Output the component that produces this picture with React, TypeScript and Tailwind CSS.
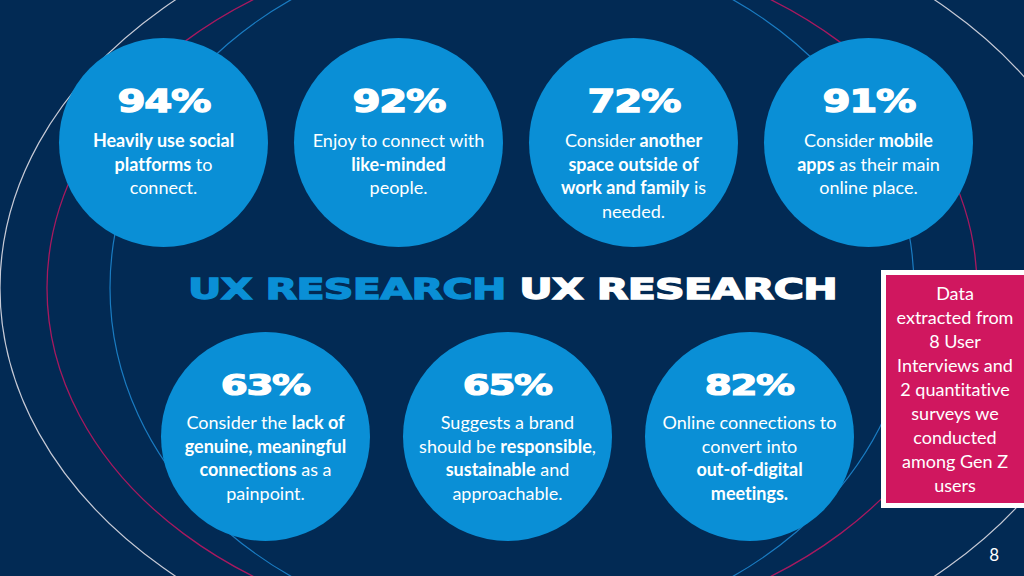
import React from "react";

type Part = { t: string; b?: boolean };
type Stat = { pct: string; lines: Part[][] };

const top: Stat[] = [
  {
    pct: "94%",
    lines: [
      [{ t: "Heavily use social", b: true }],
      [{ t: "platforms", b: true }, { t: " to" }],
      [{ t: "connect." }],
    ],
  },
  {
    pct: "92%",
    lines: [
      [{ t: "Enjoy to connect with" }],
      [{ t: "like-minded", b: true }],
      [{ t: "people." }],
    ],
  },
  {
    pct: "72%",
    lines: [
      [{ t: "Consider " }, { t: "another", b: true }],
      [{ t: "space outside of", b: true }],
      [{ t: "work and family", b: true }, { t: " is" }],
      [{ t: "needed." }],
    ],
  },
  {
    pct: "91%",
    lines: [
      [{ t: "Consider " }, { t: "mobile", b: true }],
      [{ t: "apps", b: true }, { t: " as their main" }],
      [{ t: "online place." }],
    ],
  },
];

const bottom: Stat[] = [
  {
    pct: "63%",
    lines: [
      [{ t: "Consider the " }, { t: "lack of", b: true }],
      [{ t: "genuine, meaningful", b: true }],
      [{ t: "connections", b: true }, { t: " as a" }],
      [{ t: "painpoint." }],
    ],
  },
  {
    pct: "65%",
    lines: [
      [{ t: "Suggests a brand" }],
      [{ t: "should be " }, { t: "responsible", b: true }, { t: "," }],
      [{ t: "sustainable", b: true }, { t: " and" }],
      [{ t: "approachable." }],
    ],
  },
  {
    pct: "82%",
    lines: [
      [{ t: "Online connections to" }],
      [{ t: "convert into" }],
      [{ t: "out-of-digital", b: true }],
      [{ t: "meetings.", b: true }],
    ],
  },
];

const wide = { fontFamily: '"DejaVu Sans", sans-serif' };
const body = { fontFamily: 'Lato, "Noto Sans", sans-serif' };

function Lines({ lines }: { lines: Part[][] }) {
  return (
    <div
      className="flex flex-col items-center text-white text-[18px] leading-[23.5px] [font-variant-ligatures:none]"
      style={body}
    >
      {lines.map((l, i) => (
        <div key={i} className="whitespace-nowrap">
          {l.map((p, j) => (
            <span key={j} className={p.b ? "font-bold" : "font-normal"}>
              {p.t}
            </span>
          ))}
        </div>
      ))}
    </div>
  );
}

function TopCircle({ s }: { s: Stat }) {
  return (
    <div className="w-[209px] h-[209px] shrink-0 rounded-full bg-[#0a8fd6] flex flex-col items-center pt-[47px]">
      <div
        className="text-white font-bold text-[32px] leading-[32px] scale-x-[1.26] tracking-[-1px] whitespace-nowrap [-webkit-text-stroke:1.3px_white]"
        style={wide}
      >
        {s.pct}
      </div>
      <div className="mt-[12px]">
        <Lines lines={s.lines} />
      </div>
    </div>
  );
}

function BottomCircle({ s }: { s: Stat }) {
  return (
    <div className="w-[209px] h-[209px] shrink-0 rounded-full bg-[#0a8fd6] flex flex-col items-center pt-[38px]">
      <div
        className="text-white font-bold text-[29px] leading-[30px] scale-x-[1.34] tracking-[-1px] whitespace-nowrap [-webkit-text-stroke:1.2px_white]"
        style={wide}
      >
        {s.pct}
      </div>
      <div className="mt-[11px]">
        <Lines lines={s.lines} />
      </div>
    </div>
  );
}

export default function App() {
  return (
    <div className="relative w-[1024px] h-[576px] overflow-hidden bg-[#022a54]">
      <svg
        className="absolute inset-0 pointer-events-none"
        width="1024"
        height="576"
        viewBox="0 0 1024 576"
      >
        <ellipse cx="555" cy="288" rx="555" ry="395" fill="none" stroke="#c7cad6" strokeWidth="1.2" />
        <ellipse cx="512" cy="288" rx="465" ry="347" fill="none" stroke="#a8195f" strokeWidth="1.3" />
        <ellipse cx="512" cy="288" rx="402" ry="345" fill="none" stroke="#1a7cc2" strokeWidth="1.2" />
      </svg>

      <div className="relative flex flex-col">
        <div className="flex gap-[26px] pl-[59px] pt-[38px]">
          {top.map((s) => (
            <TopCircle key={s.pct} s={s} />
          ))}
        </div>

        <div className="grid grid-cols-[881px_143px] mt-[23px]">
          <div className="col-start-1 col-span-2 row-start-1 flex justify-center pt-[1px]">
            <div
              className="font-bold text-[29px] leading-[36px] whitespace-nowrap scale-x-[1.42] tracking-[-0.5px]"
              style={wide}
            >
              <span className="text-[#0a8fd6] [-webkit-text-stroke:1.3px_#0a8fd6]">UX RESEARCH</span>
              <span className="text-white [-webkit-text-stroke:1.3px_white]"> UX RESEARCH</span>
            </div>
          </div>

          <div className="col-start-2 row-start-1 row-span-2 self-start h-[238px] border-[5px] border-r-0 border-white bg-[#d0175f] pt-[6px]">
            <div
              className="flex flex-col items-center text-white text-[18px] leading-[24px] [font-variant-ligatures:none]"
              style={body}
            >
              <div>Data</div>
              <div className="whitespace-nowrap">extracted from</div>
              <div>8 User</div>
              <div className="whitespace-nowrap">Interviews and</div>
              <div className="whitespace-nowrap">2 quantitative</div>
              <div className="whitespace-nowrap">surveys we</div>
              <div>conducted</div>
              <div className="whitespace-nowrap">among Gen Z</div>
              <div>users</div>
            </div>
          </div>

          <div className="col-start-1 row-start-2 flex gap-[33px] pl-[161px] mt-[25px]">
            {bottom.map((s) => (
              <BottomCircle key={s.pct} s={s} />
            ))}
          </div>
        </div>

        <div className="flex justify-end pr-[25px] mt-[4px]">
          <span className="text-white text-[17px] leading-[20px]" style={body}>
            8
          </span>
        </div>
      </div>
    </div>
  );
}
